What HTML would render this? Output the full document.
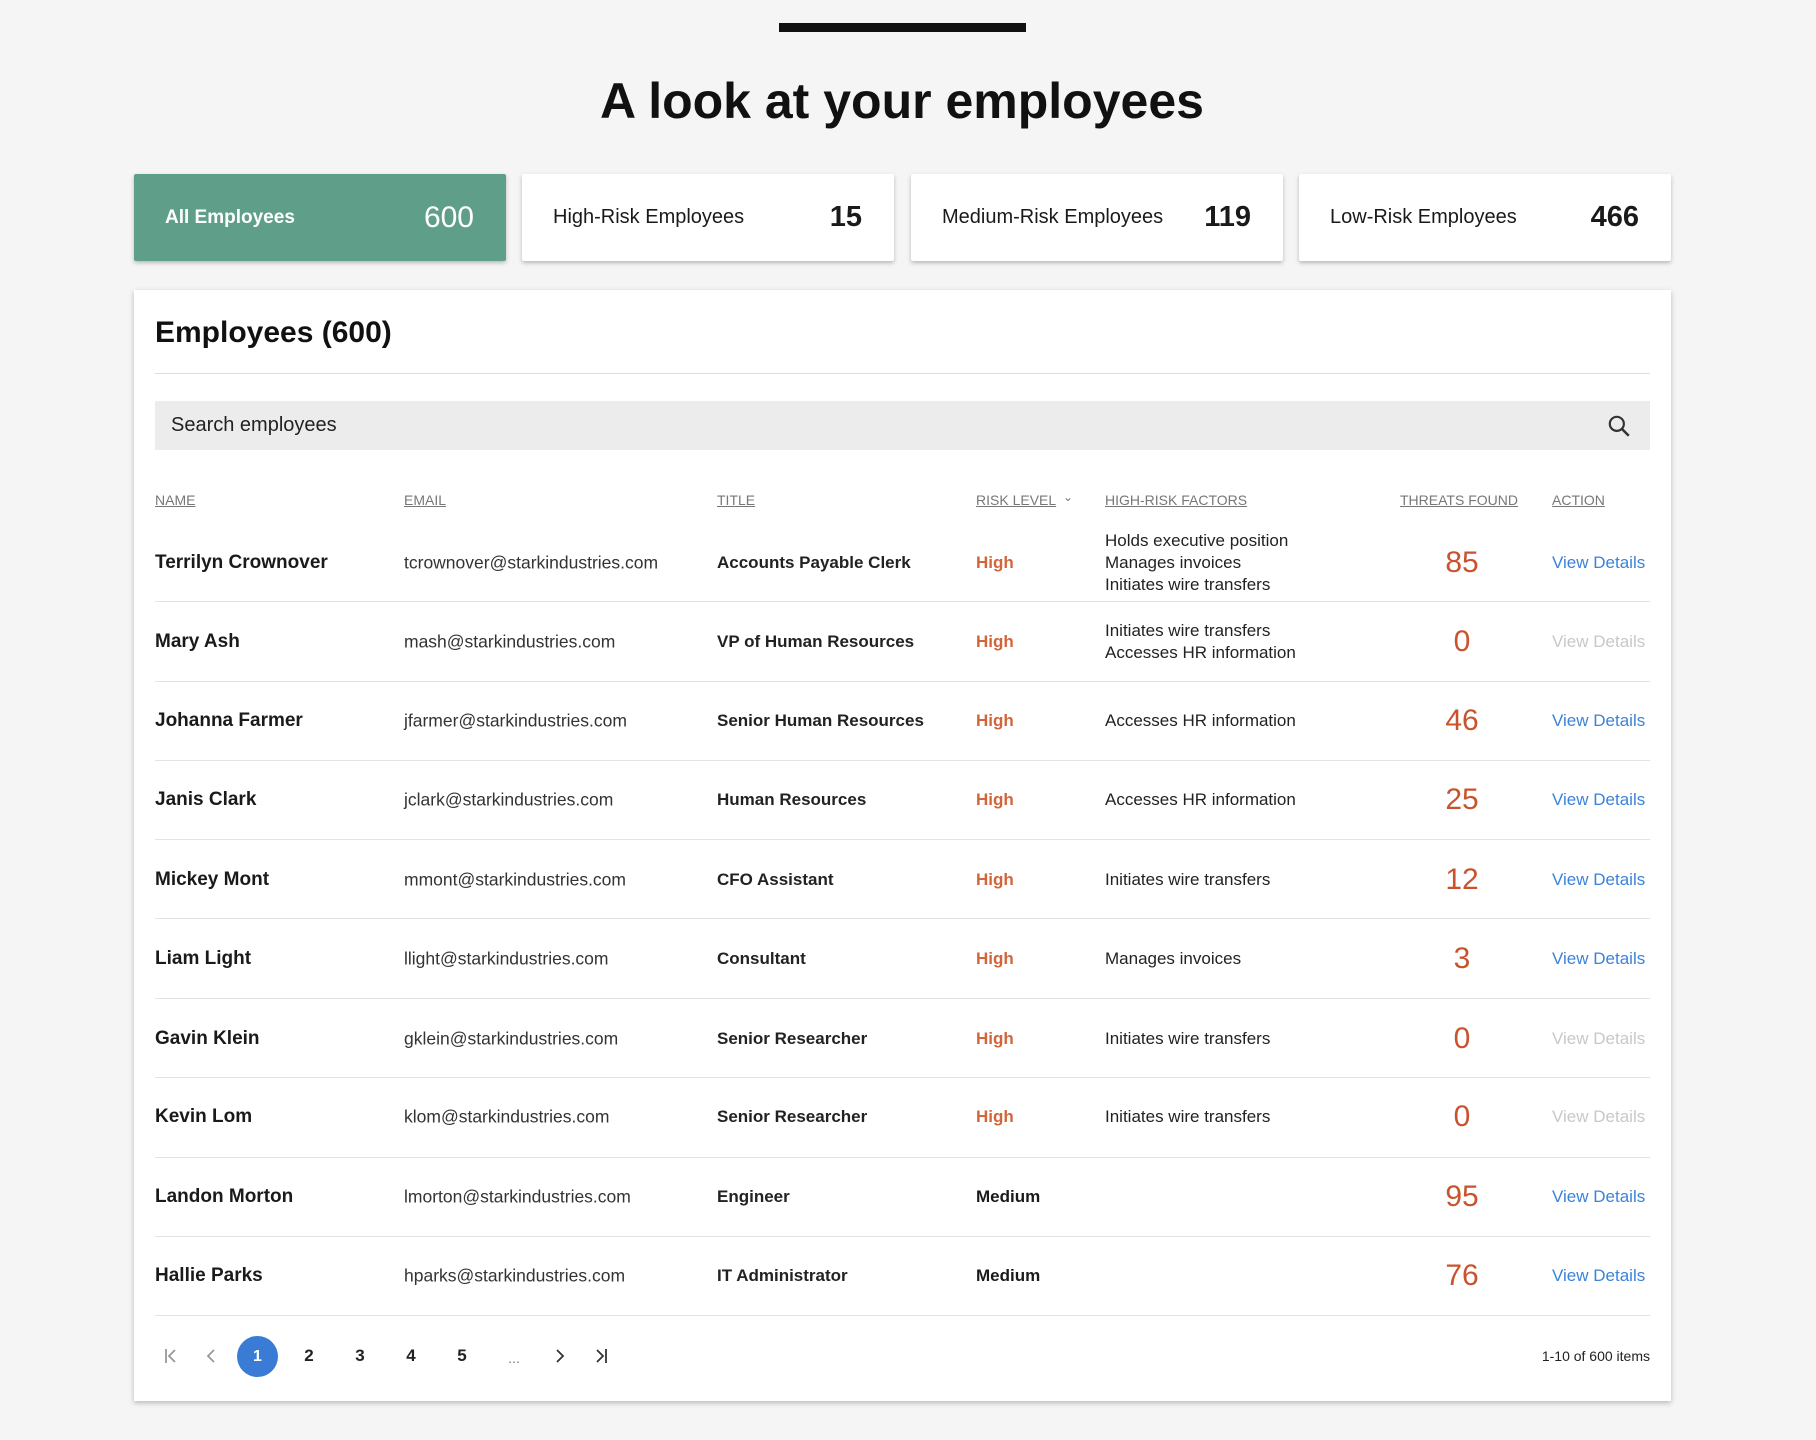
<!DOCTYPE html>
<html><head><meta charset="utf-8"><style>
*{margin:0;padding:0;box-sizing:border-box}
body{width:1816px;height:1440px;background:#f5f5f5;font-family:"Liberation Sans",Arial,sans-serif;position:relative;overflow:hidden;color:#1a1a1a}
.abs{position:absolute}
.bar{left:779px;top:23px;width:247px;height:9px;background:#111}
h1{position:absolute;left:0;width:1804px;top:72px;text-align:center;font-size:50px;font-weight:bold;color:#111}
.card{position:absolute;top:174px;height:87px;width:372px;background:#fff;box-shadow:0 2px 4px rgba(0,0,0,.25);border-radius:2px;display:flex;align-items:center;justify-content:space-between;padding:0 32px 0 31px}
.card .l{font-size:20px}
.card .n{font-size:29px;font-weight:bold}
.card.g{background:#5f9f8a;color:#fff}
.card.g .l{font-weight:bold;font-size:19px}
.card.g .n{font-weight:normal;font-size:30px}
.panel{position:absolute;left:134px;top:290px;width:1537px;height:1111px;background:#fff;box-shadow:0 2px 5px rgba(0,0,0,.25)}
.hd{font-size:14px;color:#777;text-decoration:underline;top:492px}
.cell{position:absolute;transform:translateY(-50%);white-space:nowrap}
.nm{left:155px;font-size:19px;font-weight:bold}
.em{left:404px;font-size:17.5px;color:#333}
.ti{left:717px;font-size:17px;font-weight:bold;color:#222}
.rk{left:976px;font-size:17px;font-weight:bold}
.hi{color:#d2653a}
.fa{left:1105px;font-size:17px;line-height:22px;color:#222}
.th{left:1400px;width:124px;text-align:center;font-size:30px;color:#c9532d}
.ac{left:1552px;font-size:17px;color:#3b82d9}
.ac.d{color:#c8c8c8}
.sep{position:absolute;left:155px;width:1495px;height:1px;background:#e3e3e3}
.pg{position:absolute;top:1356px;transform:translate(-50%,-50%);font-size:17px;font-weight:bold;color:#222}
</style></head><body>
<div class="abs bar"></div>
<h1>A look at your employees</h1>
<div class="card g" style="left:134px"><span class="l">All Employees</span><span class="n">600</span></div>
<div class="card" style="left:522px"><span class="l">High-Risk Employees</span><span class="n">15</span></div>
<div class="card" style="left:911px"><span class="l">Medium-Risk Employees</span><span class="n">119</span></div>
<div class="card" style="left:1299px"><span class="l">Low-Risk Employees</span><span class="n">466</span></div>
<div class="panel"></div>
<div class="abs" style="left:155px;top:316px;font-size:30px;font-weight:bold;color:#111">Employees (600)</div>
<div class="sep" style="top:373px;background:#ddd"></div>
<div class="abs" style="left:155px;top:401px;width:1495px;height:49px;background:#ececec"></div>
<div class="abs" style="left:171px;top:414px;font-size:20px;color:#222">Search employees</div>
<svg class="abs" style="left:1606px;top:413px" width="26" height="26" viewBox="0 0 24 24"><circle cx="10" cy="10" r="6.5" fill="none" stroke="#333" stroke-width="2"/><path d="M15 15l6 6" stroke="#333" stroke-width="2.4"/></svg>
<div class="abs hd" style="left:155px">NAME</div>
<div class="abs hd" style="left:404px">EMAIL</div>
<div class="abs hd" style="left:717px">TITLE</div>
<div class="abs hd" style="left:976px">RISK LEVEL</div>
<div class="abs" style="left:1063px;top:490px;font-size:12px;color:#777">⌄</div>
<div class="abs hd" style="left:1105px">HIGH-RISK FACTORS</div>
<div class="abs hd" style="left:1400px">THREATS FOUND</div>
<div class="abs hd" style="left:1552px">ACTION</div>

<div class="cell nm" style="top:563px">Terrilyn Crownover</div><div class="cell em" style="top:563px">tcrownover@starkindustries.com</div><div class="cell ti" style="top:563px">Accounts Payable Clerk</div><div class="cell rk hi" style="top:563px">High</div><div class="cell fa" style="top:563px">Holds executive position<br>Manages invoices<br>Initiates wire transfers</div><div class="cell th" style="top:563px">85</div><div class="cell ac" style="top:563px">View Details</div>
<div class="sep" style="top:601px"></div>
<div class="cell nm" style="top:642px">Mary Ash</div><div class="cell em" style="top:642px">mash@starkindustries.com</div><div class="cell ti" style="top:642px">VP of Human Resources</div><div class="cell rk hi" style="top:642px">High</div><div class="cell fa" style="top:642px">Initiates wire transfers<br>Accesses HR information</div><div class="cell th" style="top:642px">0</div><div class="cell ac d" style="top:642px">View Details</div>
<div class="sep" style="top:681px"></div>
<div class="cell nm" style="top:721px">Johanna Farmer</div><div class="cell em" style="top:721px">jfarmer@starkindustries.com</div><div class="cell ti" style="top:721px">Senior Human Resources</div><div class="cell rk hi" style="top:721px">High</div><div class="cell fa" style="top:721px">Accesses HR information</div><div class="cell th" style="top:721px">46</div><div class="cell ac" style="top:721px">View Details</div>
<div class="sep" style="top:760px"></div>
<div class="cell nm" style="top:800px">Janis Clark</div><div class="cell em" style="top:800px">jclark@starkindustries.com</div><div class="cell ti" style="top:800px">Human Resources</div><div class="cell rk hi" style="top:800px">High</div><div class="cell fa" style="top:800px">Accesses HR information</div><div class="cell th" style="top:800px">25</div><div class="cell ac" style="top:800px">View Details</div>
<div class="sep" style="top:839px"></div>
<div class="cell nm" style="top:880px">Mickey Mont</div><div class="cell em" style="top:880px">mmont@starkindustries.com</div><div class="cell ti" style="top:880px">CFO Assistant</div><div class="cell rk hi" style="top:880px">High</div><div class="cell fa" style="top:880px">Initiates wire transfers</div><div class="cell th" style="top:880px">12</div><div class="cell ac" style="top:880px">View Details</div>
<div class="sep" style="top:918px"></div>
<div class="cell nm" style="top:959px">Liam Light</div><div class="cell em" style="top:959px">llight@starkindustries.com</div><div class="cell ti" style="top:959px">Consultant</div><div class="cell rk hi" style="top:959px">High</div><div class="cell fa" style="top:959px">Manages invoices</div><div class="cell th" style="top:959px">3</div><div class="cell ac" style="top:959px">View Details</div>
<div class="sep" style="top:998px"></div>
<div class="cell nm" style="top:1039px">Gavin Klein</div><div class="cell em" style="top:1039px">gklein@starkindustries.com</div><div class="cell ti" style="top:1039px">Senior Researcher</div><div class="cell rk hi" style="top:1039px">High</div><div class="cell fa" style="top:1039px">Initiates wire transfers</div><div class="cell th" style="top:1039px">0</div><div class="cell ac d" style="top:1039px">View Details</div>
<div class="sep" style="top:1077px"></div>
<div class="cell nm" style="top:1117px">Kevin Lom</div><div class="cell em" style="top:1117px">klom@starkindustries.com</div><div class="cell ti" style="top:1117px">Senior Researcher</div><div class="cell rk hi" style="top:1117px">High</div><div class="cell fa" style="top:1117px">Initiates wire transfers</div><div class="cell th" style="top:1117px">0</div><div class="cell ac d" style="top:1117px">View Details</div>
<div class="sep" style="top:1157px"></div>
<div class="cell nm" style="top:1197px">Landon Morton</div><div class="cell em" style="top:1197px">lmorton@starkindustries.com</div><div class="cell ti" style="top:1197px">Engineer</div><div class="cell rk" style="top:1197px">Medium</div><div class="cell th" style="top:1197px">95</div><div class="cell ac" style="top:1197px">View Details</div>
<div class="sep" style="top:1236px"></div>
<div class="cell nm" style="top:1276px">Hallie Parks</div><div class="cell em" style="top:1276px">hparks@starkindustries.com</div><div class="cell ti" style="top:1276px">IT Administrator</div><div class="cell rk" style="top:1276px">Medium</div><div class="cell th" style="top:1276px">76</div><div class="cell ac" style="top:1276px">View Details</div>
<div class="sep" style="top:1315px"></div>

<svg class="abs" style="left:163px;top:1347px" width="16" height="18" viewBox="0 0 16 18"><path d="M3 2v14M12 3L6 9l6 6" fill="none" stroke="#999" stroke-width="1.8"/></svg>
<svg class="abs" style="left:204px;top:1347px" width="14" height="18" viewBox="0 0 14 18"><path d="M10 3L4 9l6 6" fill="none" stroke="#999" stroke-width="1.8"/></svg>
<div class="abs" style="left:237px;top:1336px;width:41px;height:41px;border-radius:50%;background:#3a7bd5;color:#fff;font-size:16px;font-weight:bold;text-align:center;line-height:41px">1</div>
<div class="pg" style="left:309px">2</div>
<div class="pg" style="left:360px">3</div>
<div class="pg" style="left:411px">4</div>
<div class="pg" style="left:462px">5</div>
<div class="pg" style="left:514px;font-weight:normal;color:#777;font-size:14px;top:1358px">...</div>
<svg class="abs" style="left:553px;top:1347px" width="14" height="18" viewBox="0 0 14 18"><path d="M4 3l6 6-6 6" fill="none" stroke="#333" stroke-width="1.8"/></svg>
<svg class="abs" style="left:593px;top:1347px" width="16" height="18" viewBox="0 0 16 18"><path d="M4 3l6 6-6 6M13 2v14" fill="none" stroke="#333" stroke-width="1.8"/></svg>
<div class="abs" style="right:166px;top:1348px;font-size:14px;color:#222">1-10 of 600 items</div>
</body></html>
